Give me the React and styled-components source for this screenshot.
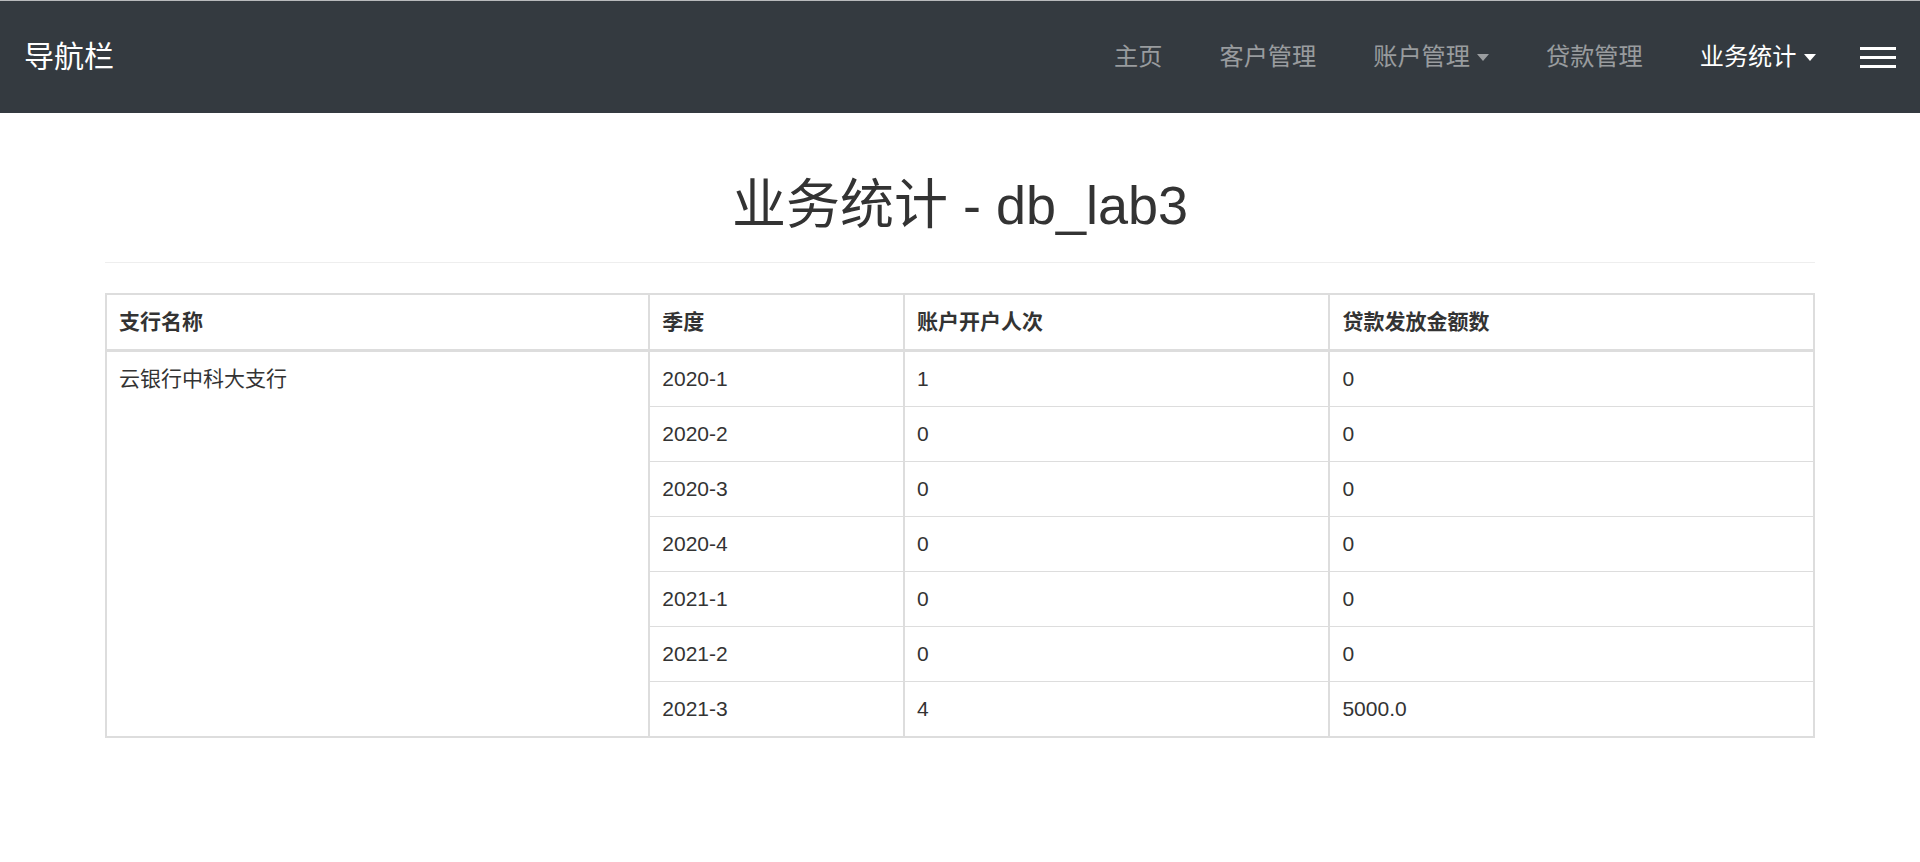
import React from "react";
import styled, { createGlobalStyle } from "styled-components";

const GlobalStyle = createGlobalStyle`
  html, body {
    margin: 0;
    padding: 0;
    background: #fff;
  }
  body {
    font-family: "Liberation Sans", "Noto Sans CJK SC", sans-serif;
    font-size: 21px;
    line-height: 1.42857;
    color: #333;
  }
`;

const NavBar = styled.nav`
  display: flex;
  align-items: center;
  justify-content: space-between;
  height: 112px;
  padding: 0 24px;
  background-color: #343a40;
  border-top: 1px solid #b8babc;
`;

const Brand = styled.a`
  font-size: 30px;
  line-height: 1;
  color: #fff;
  text-decoration: none;
`;

const NavList = styled.ul`
  display: flex;
  align-items: center;
  list-style: none;
  margin: 0;
  padding: 0;
`;

const NavLink = styled.a`
  display: flex;
  align-items: center;
  padding: 0 28.5px;
  font-size: 24.2px;
  line-height: 36px;
  color: ${(p) => (p.$active ? "#fff" : "rgba(255,255,255,0.5)")};
  text-decoration: none;
  cursor: pointer;

  ${(p) =>
    p.$dropdown &&
    `
    &::after {
      content: "";
      display: inline-block;
      margin-left: 7px;
      border-top: 7px solid;
      border-left: 6.5px solid transparent;
      border-right: 6.5px solid transparent;
    }
  `}
`;

const Toggler = styled.button`
  display: flex;
  flex-direction: column;
  gap: 6px;
  margin-left: 16px;
  padding: 0;
  background: none;
  border: 0;
  cursor: pointer;

  span {
    display: block;
    width: 36px;
    height: 3px;
    background: #fff;
  }
`;

const Container = styled.main`
  padding: 63px 105px 0;
`;

const PageHeader = styled.div`
  padding-bottom: 27px;
  border-bottom: 1px solid #eee;
  margin-bottom: 30px;
`;

const Title = styled.h1`
  margin: 0;
  font-size: 54px;
  line-height: 1.1;
  font-weight: 400;
  text-align: center;
  color: #333;
`;

const Table = styled.table`
  width: 100%;
  table-layout: fixed;
  border-collapse: collapse;
  border: 2px solid #ddd;
`;

const Col = styled.col`
  width: ${(p) => p.$w}%;
`;

const Th = styled.th`
  padding: 12px;
  text-align: left;
  font-weight: 700;
  vertical-align: bottom;
  border: 1px solid #ddd;
  border-left-width: 2px;
  border-right-width: 2px;
  border-bottom-width: 3px;
`;

const Td = styled.td`
  padding: 12px;
  vertical-align: top;
  border: 1px solid #ddd;
  border-left-width: 2px;
  border-right-width: 2px;
`;

const columns = [
  { label: "支行名称", w: 31.81 },
  { label: "季度", w: 14.91 },
  { label: "账户开户人次", w: 24.91 },
  { label: "贷款发放金额数", w: 28.37 },
];

const stats = [
  ["2020-1", "1", "0"],
  ["2020-2", "0", "0"],
  ["2020-3", "0", "0"],
  ["2020-4", "0", "0"],
  ["2021-1", "0", "0"],
  ["2021-2", "0", "0"],
  ["2021-3", "4", "5000.0"],
];

const navItems = [
  { label: "主页" },
  { label: "客户管理" },
  { label: "账户管理", dropdown: true },
  { label: "贷款管理" },
  { label: "业务统计", dropdown: true, active: true },
];

const App = () => {
  return (
    <>
      <GlobalStyle />
      <NavBar>
        <Brand href="#">导航栏</Brand>
        <NavList>
          {navItems.map((item) => (
            <li key={item.label}>
              <NavLink $active={item.active} $dropdown={item.dropdown}>
                {item.label}
              </NavLink>
            </li>
          ))}
          <li>
            <Toggler aria-label="menu">
              <span />
              <span />
              <span />
            </Toggler>
          </li>
        </NavList>
      </NavBar>

      <Container>
        <PageHeader>
          <Title>业务统计 - db_lab3</Title>
        </PageHeader>

        <Table>
          <colgroup>
            {columns.map((col) => (
              <Col key={col.label} $w={col.w} />
            ))}
          </colgroup>
          <thead>
            <tr>
              {columns.map((col) => (
                <Th key={col.label}>{col.label}</Th>
              ))}
            </tr>
          </thead>
          <tbody>
            {stats.map((row, index) => (
              <tr key={row[0]}>
                {index === 0 && <Td rowSpan={stats.length}>云银行中科大支行</Td>}
                {row.map((cell, i) => (
                  <Td key={i}>{cell}</Td>
                ))}
              </tr>
            ))}
          </tbody>
        </Table>
      </Container>
    </>
  );
};

export default App;
